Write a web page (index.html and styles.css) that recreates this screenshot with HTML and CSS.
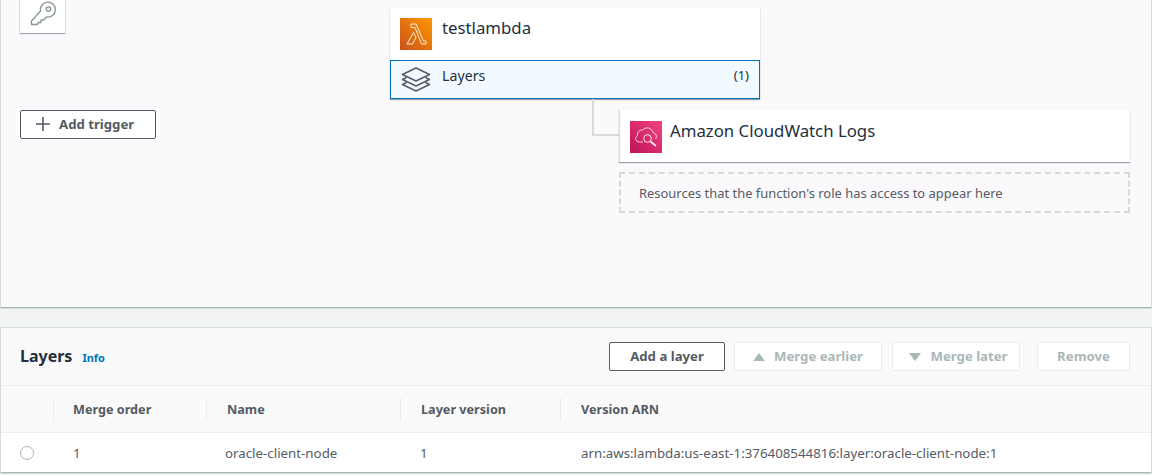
FILE: index.html
```html
<!DOCTYPE html>
<html>
<head>
  <meta charset="UTF-8">
  <title>testlambda - Layers</title>
  <link rel="stylesheet" href="styles.css">
</head>
<body>
  <div class="designer">
    <div class="node key-node">
      <svg width="28" height="28" viewBox="0 0 28 28" fill="none" stroke="#879596" stroke-width="1.3">
        <path d="M11.500 10a7.500 7.500 0 1 1 6 6L14.500 19h-2.500v2.500H9.500L8 23.500H2.500V20z" stroke-linejoin="round"/>
        <circle cx="19.500" cy="8" r="2.200"/>
      </svg>
    </div>
    <button class="btn add-trigger">
      <svg width="14" height="14" viewBox="0 0 14 14" stroke="#545b64" stroke-width="1.6"><path d="M7 0v14M0 7h14"/></svg>
      Add trigger
    </button>

    <div class="node fn-node">
      <div class="fn-head">
        <svg class="svc-icon" width="32" height="32" viewBox="0 0 32 32">
          <defs>
            <linearGradient id="orange" x1="0" y1="1" x2="1" y2="0">
              <stop offset="0" stop-color="#c8511b"/>
              <stop offset="1" stop-color="#ff9900"/>
            </linearGradient>
          </defs>
          <rect width="32" height="32" fill="url(#orange)"/>
          <path d="M11 6h5l7.500 17H26v3h-4.500L15 9.500h-4zM13.500 14.500l2.500 5L12.500 26H7z" fill="none" stroke="#fff" stroke-width="1" stroke-linejoin="round" opacity=".85"/>
        </svg>
        <span class="node-title">testlambda</span>
      </div>
      <div class="fn-layers">
        <svg width="30" height="26" viewBox="0 0 30 26" fill="none" stroke="#545b64" stroke-width="1.400" stroke-linejoin="round">
          <path d="M15 1l13.500 6.500L15 14 1.500 7.500z"/>
          <path d="M5.500 10.500l-4 2L15 19l13.500-6.500-4-2"/>
          <path d="M5.500 15.500l-4 2L15 24l13.500-6.500-4-2"/>
        </svg>
        <span class="layers-label">Layers</span>
        <span class="layers-count">(1)</span>
      </div>
    </div>

    <div class="connector"></div>

    <div class="node res-node">
      <svg class="svc-icon" width="32" height="32" viewBox="0 0 32 32">
        <defs>
          <linearGradient id="pink" x1="0" y1="1" x2="1" y2="0">
            <stop offset="0" stop-color="#bc1356"/>
            <stop offset="1" stop-color="#f34482"/>
          </linearGradient>
        </defs>
        <rect width="32" height="32" fill="url(#pink)"/>
        <path d="M13 21H9a3.500 3.500 0 0 1-1.500-6.600A4.500 4.500 0 0 1 12.500 9a6 6 0 0 1 10.500 2.500 4 4 0 0 1 2.500 6.500" fill="none" stroke="#fff" stroke-width="1" opacity=".75"/>
        <circle cx="17.500" cy="17.500" r="3.800" fill="none" stroke="#fff" stroke-width="1" opacity=".9"/>
        <path d="M20.500 20.500l5.500 4.500" stroke="#fff" stroke-width="1.800" opacity=".9"/>
      </svg>
      <span class="node-title">Amazon CloudWatch Logs</span>
    </div>
    <div class="res-note">Resources that the function's role has access to appear here</div>
  </div>

  <div class="panel">
    <div class="panel-head">
      <h2>Layers</h2>
      <a class="info">Info</a>
      <div class="actions">
        <button class="btn">Add a layer</button>
        <button class="btn off merge-up"><i class="tri up"></i>Merge earlier</button>
        <button class="btn off merge-down"><i class="tri down"></i>Merge later</button>
        <button class="btn off remove">Remove</button>
      </div>
    </div>
    <div class="tbl tbl-head">
      <div></div>
      <div><span>Merge order</span></div>
      <div><span>Name</span></div>
      <div><span>Layer version</span></div>
      <div><span>Version ARN</span></div>
    </div>
    <div class="tbl tbl-row">
      <div><i class="radio"></i></div>
      <div>1</div>
      <div>oracle-client-node</div>
      <div>1</div>
      <div>arn:aws:lambda:us-east-1:376408544816:layer:oracle-client-node:1</div>
    </div>
  </div>
</body>
</html>
```

FILE: styles.css
```css
html, body { height: 100%; }
body {
  margin: 0;
  height: 475px;
  overflow: hidden;
  background: #f2f3f3;
  font-family: "Noto Sans", sans-serif;
  font-size: 13px;
  color: #545b64;
}

/* diagram */
.designer {
  position: relative;
  height: 307px;
  margin: 0 1px;
  background: #fbf9fc;
  border-bottom: 1px solid #aab7b8;
  box-shadow: 0 0 0 1px #d5dbdb;
}
.node {
  position: absolute;
  background: #fff;
  box-shadow: 0 1px 1px rgba(0, 28, 36, .4);
}
.key-node {
  left: 19px;
  top: -4px;
  width: 45px;
  height: 37px;
  display: flex;
  align-items: center;
  justify-content: center;
  box-shadow: 0 0 1px rgba(0, 28, 36, .5), 0 1px 1px rgba(0, 28, 36, .3);
}
.fn-node {
  left: 389px;
  top: 8px;
  width: 370px;
}
.fn-head {
  height: 52px;
  display: flex;
  padding: 10px 10px 0;
  box-sizing: border-box;
  gap: 10px;
}
.svc-icon { flex: none; }
.node-title {
  font-size: 16.800px;
  line-height: 20px;
  color: #232f3e;
}
.fn-layers {
  height: 39px;
  box-sizing: border-box;
  border: 1px solid #0073bb;
  background: #f1faff;
  display: flex;
  align-items: center;
  padding: 0 10px;
  gap: 11px;
}
.layers-label {
  font-size: 14.200px;
  margin-top: -8px;
  color: #232f3e;
}
.layers-count {
  margin-left: auto;
  font-size: 13px;
  margin-top: -9px;
  color: #232f3e;
}
.connector {
  position: absolute;
  left: 591px;
  top: 99px;
  width: 27px;
  height: 37px;
  box-sizing: border-box;
  border-left: 2px solid #d5dbdb;
  border-bottom: 2px solid #d5dbdb;
}
.res-node {
  left: 618px;
  top: 110px;
  width: 511px;
  height: 52px;
  box-sizing: border-box;
  padding: 11px 10px 0;
  display: flex;
  gap: 8px;
  border-left: 1px solid #d5dbdb;
}
.res-note {
  position: absolute;
  left: 618px;
  top: 172px;
  width: 511px;
  height: 41px;
  box-sizing: border-box;
  border: 2px dashed #d5dbdb;
  padding-left: 18px;
  line-height: 39px;
  font-size: 12.950px;
}

/* buttons */
.btn {
  display: inline-flex;
  align-items: center;
  justify-content: center;
  box-sizing: border-box;
  height: 29px;
  background: #fff;
  border: 1px solid #545b64;
  border-radius: 2px;
  font: 700 13.200px "Noto Sans", sans-serif;
  color: #545b64;
  padding: 0 0 1px;
}
.btn.off {
  border-color: #eaeded;
  color: #aab7b8;
}
.btn.add-trigger {
  position: absolute;
  left: 19px;
  top: 110px;
  width: 136px;
  gap: 9px;
  justify-content: flex-start;
  padding: 0 0 1px 15px;
}
.tri {
  width: 0;
  height: 0;
  margin: 1px 9px 0 0;
  border-left: 6px solid transparent;
  border-right: 6px solid transparent;
}
.tri.up { border-bottom: 8px solid #aab7b8; }
.tri.down { border-top: 8px solid #aab7b8; }

/* layers table */
.panel {
  margin: 20px 1px 0;
  height: 144px;
  background: #fff;
  border-bottom: 1px solid #aab7b8;
  box-shadow: 0 0 0 1px #d5dbdb;
}
.panel-head {
  height: 58px;
  box-sizing: border-box;
  background: #fafafa;
  border-bottom: 1px solid #eaeded;
  display: flex;
  align-items: center;
  padding: 0 21px 0 19px;
}
.panel-head h2 {
  margin: -2px 0 0;
  font-size: 16px;
  font-weight: 700;
  color: #232f3e;
}
.info {
  margin-left: 10px;
  margin-top: 2px;
  font-size: 11px;
  font-weight: 700;
  color: #0073bb;
}
.actions {
  margin-left: auto;
  display: flex;
}
.actions .btn { width: 116px; margin-left: 9px; }
.actions .merge-up { width: 148px; }
.actions .merge-down { width: 128px; margin-left: 10px; padding-left: 5px; }
.actions .remove { width: 93px; margin-left: 17px; }
.tbl {
  display: grid;
  grid-template-columns: 52px 153px 194px 160px 1fr;
  align-items: center;
}
.tbl-head {
  height: 46px;
  background: #fafafa;
  border-bottom: 1px solid #eaeded;
  font-size: 12.650px;
  font-weight: 700;
}
.tbl-head > div {
  height: 23px;
  line-height: 23px;
  padding-left: 20px;
  border-left: 1px solid #eaeded;
}
.tbl-head > div:first-child { border-left: 0; padding: 0; }
.tbl-head > div:nth-child(2) { padding-left: 19px; }
.tbl-row { height: 39px; font-size: 13.300px; }
.tbl-row > div { padding-left: 19px; }
.tbl-row > div:first-child { padding: 0 0 0 19px; }
.tbl-row > div:nth-child(2),
.tbl-row > div:nth-child(4) { padding-left: 20px; }
.tbl-row > div:last-child { padding-left: 21px; }
.radio {
  display: block;
  width: 14px;
  height: 14px;
  box-sizing: border-box;
  border: 1px solid #aab7b8;
  border-radius: 50%;
}
```
